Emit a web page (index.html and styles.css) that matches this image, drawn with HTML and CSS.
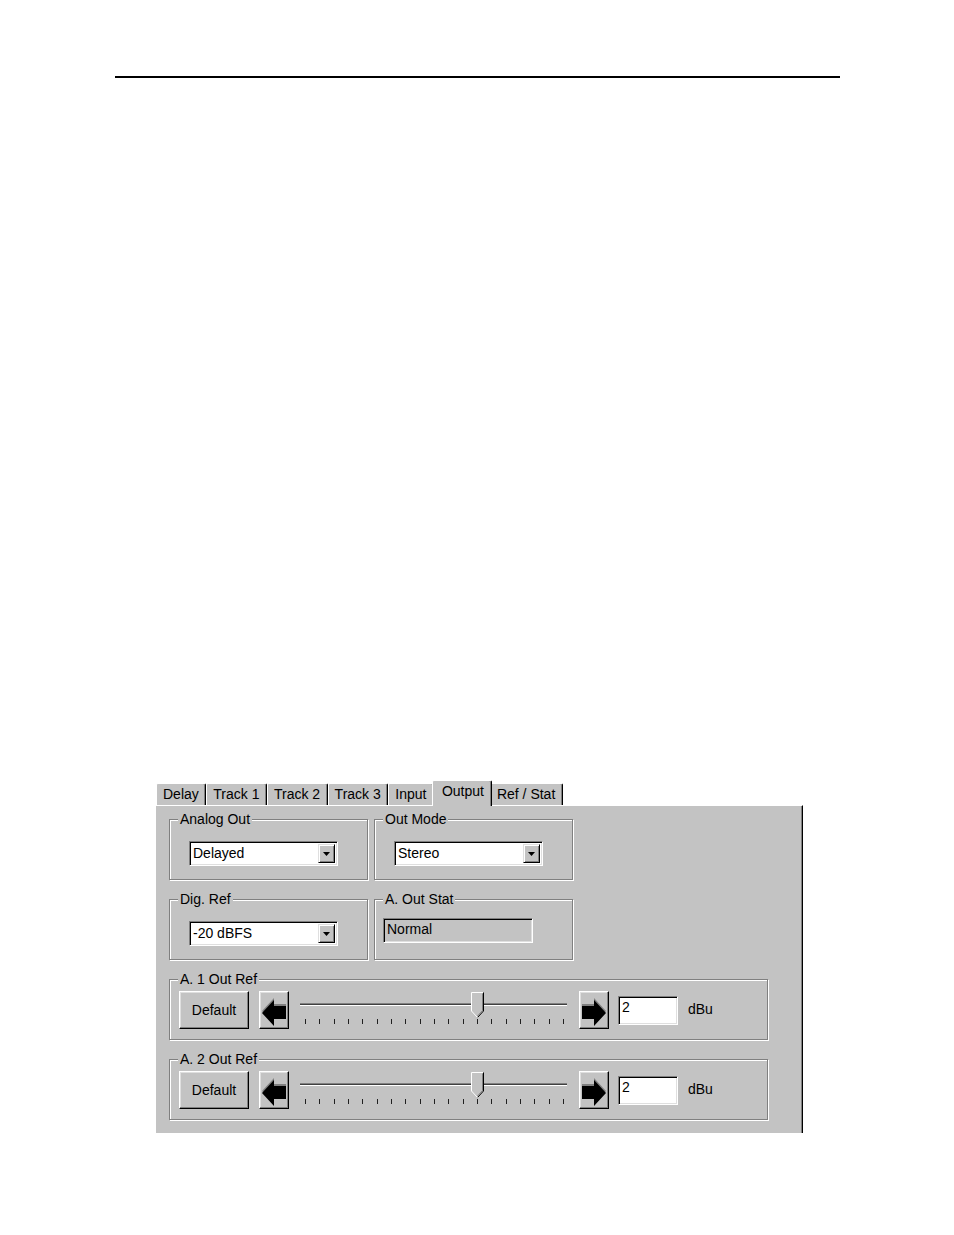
FILE: index.html
```html
<!DOCTYPE html>
<html lang="en">
<head>
<meta charset="utf-8">
<title>Output settings</title>
<link rel="stylesheet" href="styles.css">
</head>
<body>
<div class="page">
  <div class="rule"></div>
  <div class="window">
    <div class="tabs">
      <div class="tab">Delay</div>
      <div class="tab">Track 1</div>
      <div class="tab">Track 2</div>
      <div class="tab">Track 3</div>
      <div class="tab">Input</div>
      <div class="tab active">Output</div>
      <div class="tab">Ref / Stat</div>
    </div>
    <div class="panel">
      <div class="group">
        <div class="legend">Analog Out</div>
        <div class="select"><span class="val">Delayed</span><span class="drop"><svg width="7" height="4" viewBox="0 0 7 4"><path d="M0 0h7L3.5 4z" fill="#000"/></svg></span></div>
      </div>
      <div class="group">
        <div class="legend">Out Mode</div>
        <div class="select"><span class="val">Stereo</span><span class="drop"><svg width="7" height="4" viewBox="0 0 7 4"><path d="M0 0h7L3.5 4z" fill="#000"/></svg></span></div>
      </div>
      <div class="spacer"></div>
      <div class="group">
        <div class="legend">Dig. Ref</div>
        <div class="select"><span class="val">-20 dBFS</span><span class="drop"><svg width="7" height="4" viewBox="0 0 7 4"><path d="M0 0h7L3.5 4z" fill="#000"/></svg></span></div>
      </div>
      <div class="group">
        <div class="legend">A. Out Stat</div>
        <div class="statbox">Normal</div>
      </div>
      <div class="spacer"></div>
      <div class="group wide">
        <div class="legend">A. 1 Out Ref</div>
        <div class="slider-row">
          <div class="btn default">Default</div>
          <div class="btn arrow left"><svg width="28" height="36" viewBox="0 0 28 36"><path d="M2 19L14 6V12H26V25H14V32Z" fill="#808080"/><path d="M2 21L14 8V14H26V27H14V34Z" fill="#000"/></svg></div>
          <div class="slider">
            <div class="track"></div>
            <div class="ticks"><i></i><i></i><i></i><i></i><i></i><i></i><i></i><i></i><i></i><i></i><i></i><i></i><i></i><i></i><i></i><i></i><i></i><i></i><i></i></div>
            <svg class="thumb" width="13" height="26" viewBox="0 0 13 26"><path d="M0.5 0.5H12.5V19L6.5 25.5L0.5 19Z" fill="#c3c3c3"/><path d="M0.5 19V0.5H12" fill="none" stroke="#fff"/><path d="M12.5 0.5V19L6.5 25.5" fill="none" stroke="#000"/><path d="M11.5 1.5V18.6L6.5 24" fill="none" stroke="#808080"/><path d="M0.5 19L6.5 25.5" fill="none" stroke="#fff"/></svg>
          </div>
          <div class="btn arrow right"><svg width="28" height="36" viewBox="0 0 28 36"><path d="M26 19L14 6V12H2V25H14V32Z" fill="#808080"/><path d="M26 21L14 8V14H2V27H14V34Z" fill="#000"/></svg></div>
          <div class="value">2</div>
          <div class="unit">dBu</div>
        </div>
      </div>
      <div class="group wide">
        <div class="legend">A. 2 Out Ref</div>
        <div class="slider-row">
          <div class="btn default">Default</div>
          <div class="btn arrow left"><svg width="28" height="36" viewBox="0 0 28 36"><path d="M2 19L14 6V12H26V25H14V32Z" fill="#808080"/><path d="M2 21L14 8V14H26V27H14V34Z" fill="#000"/></svg></div>
          <div class="slider">
            <div class="track"></div>
            <div class="ticks"><i></i><i></i><i></i><i></i><i></i><i></i><i></i><i></i><i></i><i></i><i></i><i></i><i></i><i></i><i></i><i></i><i></i><i></i><i></i></div>
            <svg class="thumb" width="13" height="26" viewBox="0 0 13 26"><path d="M0.5 0.5H12.5V19L6.5 25.5L0.5 19Z" fill="#c3c3c3"/><path d="M0.5 19V0.5H12" fill="none" stroke="#fff"/><path d="M12.5 0.5V19L6.5 25.5" fill="none" stroke="#000"/><path d="M11.5 1.5V18.6L6.5 24" fill="none" stroke="#808080"/><path d="M0.5 19L6.5 25.5" fill="none" stroke="#fff"/></svg>
          </div>
          <div class="btn arrow right"><svg width="28" height="36" viewBox="0 0 28 36"><path d="M26 19L14 6V12H2V25H14V32Z" fill="#808080"/><path d="M26 21L14 8V14H2V27H14V34Z" fill="#000"/></svg></div>
          <div class="value">2</div>
          <div class="unit">dBu</div>
        </div>
      </div>
    </div>
  </div>
</div>
</body>
</html>
```

FILE: styles.css
```css
* { box-sizing: border-box; }
body {
  margin: 0;
  background: #fff;
  font-family: "Liberation Sans", Arial, sans-serif;
  font-size: 14px;
  color: #000;
}
.page { padding-top: 76px; }
.rule {
  margin-left: 115px;
  width: 725px;
  height: 2px;
  background: #000;
}
.window {
  margin: 702px 0 0 155px;
  width: 648px;
}
.tabs {
  display: flex;
  align-items: flex-end;
  height: 25px;
  padding-left: 1px;
  position: relative;
  z-index: 1;
}
.tab {
  height: 22px;
  line-height: 20px;
  padding: 0 6.5px 0 6px;
  background: #c3c3c3;
  border-top: 1px solid #fff;
  border-left: 1px solid #fff;
  border-right: 1px solid #000;
  box-shadow: inset -1px 0 0 #808080;
  border-radius: 2px 2px 0 0;
  white-space: nowrap;
}
.tab.active {
  height: 26px;
  margin: 0 -2px -1px;
  padding: 0 7px 0 9px;
  position: relative;
  z-index: 2;
}
.panel {
  height: 328px;
  background: #c3c3c3;
  border-top: 1px solid #fff;
  border-left: 1px solid #fff;
  border-right: 1px solid #000;
  box-shadow: inset -1px 0 0 #808080;
  padding: 13px 0 0 13px;
  display: grid;
  grid-template-columns: 199px 199px 189px;
  column-gap: 6px;
  row-gap: 19px;
  align-content: start;
}
.group {
  height: 61px;
  border: 1px solid #808080;
  box-shadow: inset 1px 1px 0 #fff, 1px 1px 0 #fff;
}
.group.wide { grid-column: 1 / -1; }
.legend {
  width: fit-content;
  margin: -9px 0 0 8px;
  padding: 0 2px;
  line-height: 16px;
  background: #c3c3c3;
  white-space: nowrap;
}
.select {
  display: flex;
  width: 149px;
  height: 25px;
  margin: 14px 0 0 19px;
  padding: 2px;
  background: #fff;
  border: 1px solid;
  border-color: #808080 #fff #fff #808080;
  box-shadow: inset 1px 1px 0 #000, inset -1px -1px 0 #dfdfdf;
}
.select .val {
  flex: 1;
  line-height: 19px;
  padding-left: 1px;
}
.drop {
  width: 17px;
  height: 19px;
  display: flex;
  align-items: center;
  justify-content: center;
  background: #c3c3c3;
  border: 1px solid;
  border-color: #dfdfdf #000 #000 #dfdfdf;
  box-shadow: inset 1px 1px 0 #fff, inset -1px -1px 0 #808080;
}
.statbox {
  width: 150px;
  height: 25px;
  margin: 11px 0 0 8px;
  padding: 2px 3px;
  line-height: 17px;
  border: 1px solid;
  border-color: #808080 #fff #fff #808080;
  box-shadow: inset 1px 1px 0 #000, inset -1px -1px 0 #dfdfdf;
}
.slider-row {
  display: flex;
  align-items: flex-start;
  margin: 4px 0 0 9px;
}
.btn {
  height: 38px;
  background: #c3c3c3;
  border: 1px solid;
  border-color: #fff #000 #000 #fff;
  box-shadow: inset -1px -1px 0 #808080, inset 1px 1px 0 #dfdfdf;
  display: flex;
  align-items: center;
  justify-content: center;
}
.btn.default { width: 70px; }
.btn.arrow { width: 30px; margin-left: 10px; }
.btn.arrow.right { margin-left: 0; }
.slider {
  position: relative;
  width: 290px;
  height: 38px;
}
.track {
  margin: 12px 12px 0 11px;
  height: 3px;
  background: #404040;
  border-top: 1px solid #808080;
  border-bottom: 1px solid #fff;
}
.ticks {
  display: flex;
  justify-content: space-between;
  margin: 13px 15px 0 16px;
}
.ticks i {
  display: block;
  width: 1px;
  height: 5px;
  background: #202020;
}
.thumb {
  position: absolute;
  left: 182px;
  top: 1px;
}
.value {
  width: 60px;
  height: 29px;
  margin: 5px 0 0 9px;
  padding: 2px 3px;
  line-height: 17px;
  background: #fff;
  border: 1px solid;
  border-color: #808080 #fff #fff #808080;
  box-shadow: inset 1px 1px 0 #000, inset -1px -1px 0 #dfdfdf;
}
.unit {
  margin: 10px 0 0 10px;
  line-height: 16px;
}
```
